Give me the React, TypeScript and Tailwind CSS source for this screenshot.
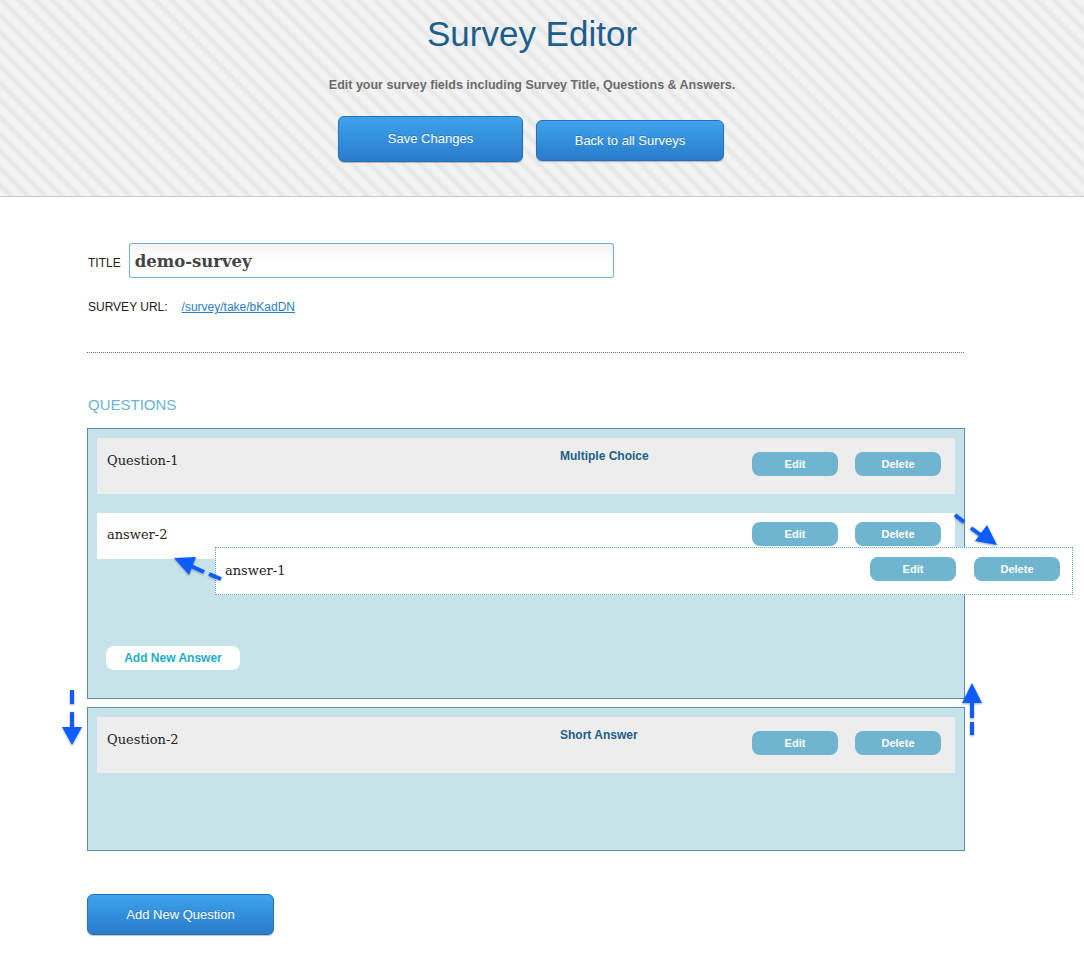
import React from 'react';

/**
 * Survey Editor page
 * Header with actions, title/url fields and the question list (one answer mid-drag)
 */

const sans = "font-['Liberation_Sans',Arial,sans-serif]";
const slab = "font-['DejaVu_Serif',Georgia,serif]";

function BlueButton({ label, className = '' }: { label: string; className?: string }) {
  return (
    <button
      className={`${sans} rounded-[6px] border border-[#2471bb] bg-gradient-to-b from-[#3ea3ec] to-[#2a7cca] text-[13px] text-white shadow-[0_1px_1px_rgba(0,0,0,0.25)] [text-shadow:0_-1px_0_rgba(0,0,0,0.2)] ${className}`}
    >
      {label}
    </button>
  );
}

function SmallButton({ label }: { label: string }) {
  return (
    <button
      className={`${sans} h-[24px] w-[86px] rounded-[8px] bg-[#6fb5cf] text-[11px] font-bold text-white`}
    >
      {label}
    </button>
  );
}

function QuestionHeader({ title, type }: { title: string; type: string }) {
  return (
    <div className="flex h-[56px] items-start bg-[#ededed] pl-[10px] pr-[14px] pt-[14px]">
      <div className={`${slab} w-[453px] pt-[1px] text-[13px] leading-[16px] text-[#222]`}>{title}</div>
      <div className={`${sans} flex-1 text-[12px] font-bold leading-[8px] text-[#1c5f88]`}>{type}</div>
      <div className="flex gap-[17px]">
        <SmallButton label="Edit" />
        <SmallButton label="Delete" />
      </div>
    </div>
  );
}

function Arrows() {
  return (
    <svg
      className="pointer-events-none absolute left-0 top-0"
      width={1084}
      height={956}
      viewBox="0 0 1084 956"
    >
      <defs>
        <filter id="sh" x="-50%" y="-50%" width="200%" height="200%">
          <feDropShadow dx="0" dy="1" stdDeviation="1" floodColor="#000" floodOpacity="0.35" />
        </filter>
      </defs>
      <g fill="#0a5cff" stroke="#0a5cff" filter="url(#sh)">
        {/* answer-1 -> back under answer-2 */}
        <polygon points="174,558 196,557 189,575" stroke="none" />
        <line x1="191" y1="566" x2="204" y2="572" strokeWidth="4" />
        <line x1="209" y1="574" x2="221" y2="579" strokeWidth="4" />
        {/* answer-2 -> down right */}
        <line x1="955" y1="515" x2="964" y2="522" strokeWidth="4" />
        <line x1="971" y1="528" x2="982" y2="536" strokeWidth="4" />
        <polygon points="997,545 975,541 987,525" stroke="none" />
        {/* down arrow left of question-2 */}
        <rect x="70" y="690" width="4" height="14" stroke="none" />
        <rect x="70" y="712" width="4" height="16" stroke="none" />
        <polygon points="62,727 82,727 72,745" stroke="none" />
        {/* up arrow right of question-1 */}
        <polygon points="962,703 982,703 972,683" stroke="none" />
        <rect x="970" y="702" width="4" height="16" stroke="none" />
        <rect x="970" y="722" width="4" height="13" stroke="none" />
      </g>
    </svg>
  );
}

export default function App() {
  return (
    <div className={`relative min-h-[956px] w-full bg-white ${sans}`}>
      {/* Header */}
      <div className="border-b border-[#c8c8c8] bg-[#ececec] bg-[repeating-linear-gradient(45deg,#f3f3f3_0px,#f3f3f3_4px,#e6e6e6_8px,#f3f3f3_12px)]">
        <div className="flex w-[1064px] flex-col items-center pb-[34px] pt-[14px]">
          <h1 className="text-[35px] font-normal leading-[40px] text-[#1b5f8c]">Survey Editor</h1>
          <p className="mt-[23px] text-[12.5px] font-bold leading-[16px] text-[#6b6b6b]">
            Edit your survey fields including Survey Title, Questions &amp; Answers.
          </p>
          <div className="ml-[-2px] mt-[23px] flex h-[46px] items-center gap-[13px]">
            <BlueButton label="Save Changes" className="h-[46px] w-[185px]" />
            <BlueButton label="Back to all Surveys" className="mt-[3px] h-[41px] w-[188px]" />
          </div>
        </div>
      </div>

      {/* Body */}
      <div className="ml-[87px] w-[878px]">
        <div className="mt-[46px] flex items-center">
          <span className="ml-[1px] pt-[5px] text-[12px] text-[#222]">TITLE</span>
          <div className="ml-[8px] h-[35px] w-[485px] rounded-[3px] bg-[#6fb3d6] p-[1px]">
            <div
              className={`${slab} flex h-full w-full items-center rounded-[2px] bg-white bg-gradient-to-b from-[#f3f3f3] via-white to-white px-[5px] pt-[4px] text-[16.5px] font-bold text-[#444]`}
            >
              demo-survey
            </div>
          </div>
        </div>

        <div className="mt-[21px] flex text-[12px] leading-[16px] text-[#222]">
          <span className="ml-[1px]">SURVEY URL:</span>
          <a href="#" className="ml-[14px] text-[#2a7dc8] underline">
            /survey/take/bKadDN
          </a>
        </div>

        <div className="mr-[1px] mt-[37px] border-t border-dotted border-[#6e6e6e]" />

        <h2 className="ml-[1px] mt-[43px] text-[15px] leading-[18px] text-[#6ab3d3]">QUESTIONS</h2>

        {/* Question 1 */}
        <div className="relative mt-[14px] border border-[#5b8da6] bg-[#c8e2e9] p-[9px]">
          <QuestionHeader title="Question-1" type="Multiple Choice" />

          <div className="mt-[19px] flex h-[46px] items-start bg-white pl-[10px] pr-[14px] pt-[9px]">
            <div className={`${slab} flex-1 pt-[5px] text-[13px] leading-[16px] text-[#222]`}>answer-2</div>
            <div className="flex gap-[17px]">
              <SmallButton label="Edit" />
              <SmallButton label="Delete" />
            </div>
          </div>

          {/* answer-1 being dragged */}
          <div className="absolute left-[127px] top-[118px] flex h-[48px] w-[858px] items-start border border-dotted border-[#5ea6c9] bg-white pl-[9px] pr-[12px] pt-[9px]">
            <div className={`${slab} flex-1 pt-[6px] text-[13px] leading-[16px] text-[#222]`}>answer-1</div>
            <div className="flex gap-[18px]">
              <SmallButton label="Edit" />
              <SmallButton label="Delete" />
            </div>
          </div>

          <button
            className={`${sans} mb-[19px] ml-[9px] mt-[87px] block h-[24px] w-[134px] rounded-[8px] bg-white text-[12px] font-bold text-[#22adc6]`}
          >
            Add New Answer
          </button>
        </div>

        {/* Question 2 */}
        <div className="mt-[8px] border border-[#5b8da6] bg-[#c8e2e9] p-[9px]">
          <QuestionHeader title="Question-2" type="Short Answer" />
          <div className="h-[68px]" />
        </div>

        <BlueButton label="Add New Question" className="mt-[43px] block h-[41px] w-[187px]" />
      </div>

      <Arrows />
    </div>
  );
}
